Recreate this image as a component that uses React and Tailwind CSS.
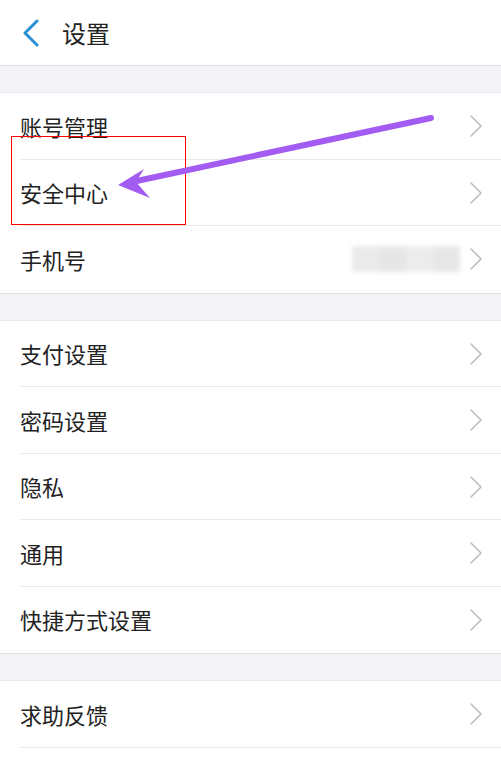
const groups = [
  ["账号管理", "安全中心", "手机号"],
  ["支付设置", "密码设置", "隐私", "通用", "快捷方式设置"],
  ["求助反馈"],
];

const Chevron = () => (
  <svg width="12" height="22" viewBox="0 0 12 22" className="ml-auto relative">
    <polyline
      points="1,1 11,11 1,21"
      fill="none"
      stroke="#bdbdbd"
      strokeWidth="1.6"
      strokeLinecap="round"
      strokeLinejoin="round"
    />
  </svg>
);

const Row = ({ label, last }) => (
  <div className="relative h-[66.5px] flex items-center pl-5 pr-[19px] bg-white">
    <span className="text-[22px] text-[#222]">{label}</span>
    {label === "手机号" && (
      <div className="absolute left-[352px] top-[20px] w-[108px] h-[26px] blur-[2px] flex opacity-80">
        <div className="flex-1 bg-[#e6e6e6]" />
        <div className="flex-1 bg-[#e0e0e0]" />
        <div className="flex-1 bg-[#e8e8e8]" />
        <div className="flex-1 bg-[#e2e2e2]" />
      </div>
    )}
    <Chevron />
    {!last && (
      <div className="absolute left-5 right-0 bottom-0 h-px bg-[#e8e8e8]" />
    )}
  </div>
);

export default function App() {
  return (
    <div
      className="relative w-[501px] h-[761px] bg-white overflow-hidden"
      style={{ fontFamily: '"Noto Sans CJK SC", "Noto Sans", sans-serif' }}
    >
      <div className="h-[66px] flex items-center border-b border-[#e2e2e2]">
        <svg width="20" height="28" viewBox="0 0 20 28" className="ml-[20px]">
          <polyline
            points="17,2 5,14 17,26"
            fill="none"
            stroke="#2a8fd6"
            strokeWidth="3"
            strokeLinecap="round"
            strokeLinejoin="round"
          />
        </svg>
        <span className="ml-[22px] text-[24px] text-[#222]">设置</span>
      </div>
      {groups.map((g, gi) => (
        <div key={gi}>
          <div className="h-[27px] bg-[#f4f4f8] border-b border-[#eaeaea]" />
          {g.map((label, i) => (
            <Row key={label} label={label} last={i === g.length - 1 && gi < 2} />
          ))}
          {gi < 2 && <div className="h-px bg-[#e2e2e2]" />}
        </div>
      ))}

      <div className="absolute left-[11px] top-[136px] w-[175px] h-[89px] border border-[#ff0000]" />

      <svg
        className="absolute left-0 top-0"
        width="501"
        height="761"
        viewBox="0 0 501 761"
      >
        <line
          x1="431"
          y1="118"
          x2="132"
          y2="182"
          stroke="#a35cf2"
          strokeWidth="6"
          strokeLinecap="round"
        />
        <path d="M118 185 L144 169 L136 182 L150 198 Z" fill="#a35cf2" />
      </svg>
    </div>
  );
}
